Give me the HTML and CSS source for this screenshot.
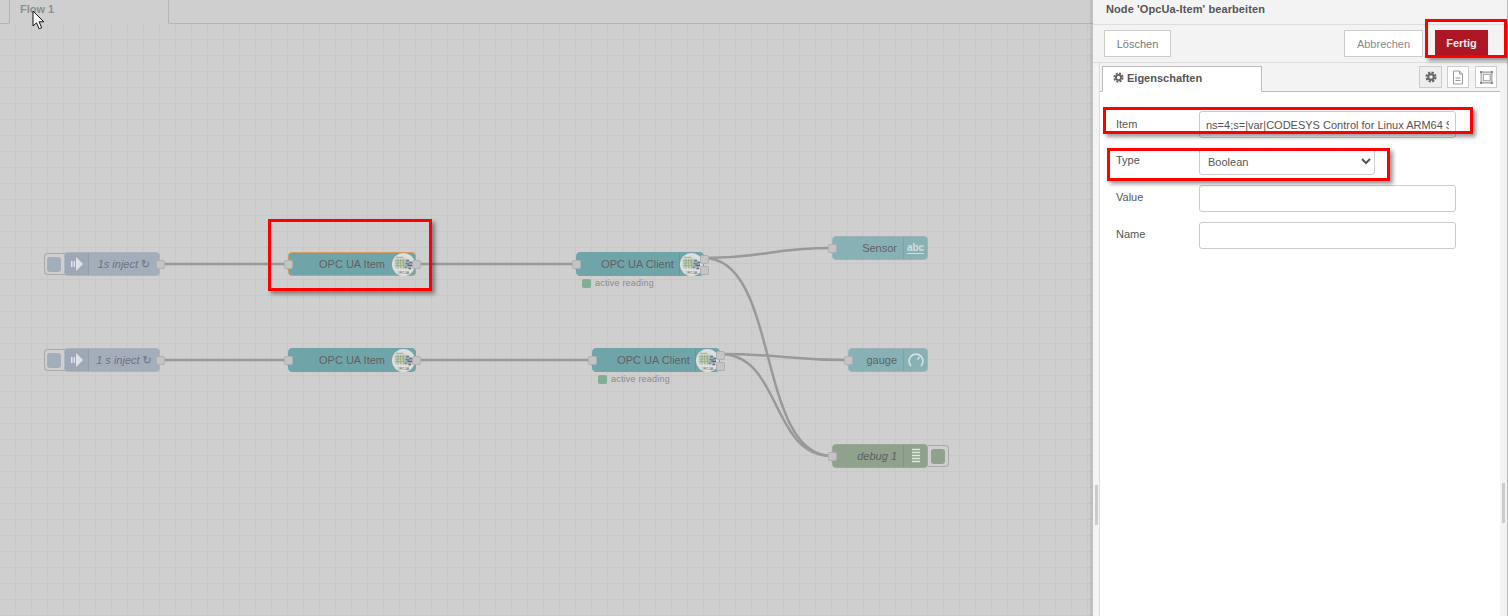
FILE: index.html
```html
<!DOCTYPE html>
<html>
<head>
    <title>Node-RED</title>
    <link rel="stylesheet" href="styles.css">
</head>
<body>
    <svg class="defs" width="0" height="0">
        <symbol id="opc" viewBox="0 0 24 24">
            <circle cx="12" cy="12" r="12" fill="#dededa"/>
            <rect x="3" y="6" width="13" height="10" fill="#c3cdb8"/>
            <path d="M3 8h13M3 10.500h13M3 13h13M6 6v10M9 6v10M12 6v10" stroke="#84a07c" stroke-width=".6"/>
            <path d="M4 4.500h8" stroke="#9aa89a" stroke-width="1"/>
            <rect x="15" y="7" width="3" height="2" fill="#5f7a8e"/>
            <rect x="18" y="9" width="3" height="2" fill="#54708a"/>
            <rect x="14" y="10" width="4" height="2" fill="#6b8294"/>
            <rect x="16" y="12" width="5" height="2" fill="#4f6b82"/>
            <rect x="13" y="14" width="3" height="2" fill="#7c90a0"/>
            <rect x="17" y="15" width="3" height="2" fill="#5f7a8e"/>
            <text x="12" y="21.500" class="opc-text">OPC UA</text>
        </symbol>
        <symbol id="inject" viewBox="0 0 14 16">
            <path d="M1 5h1.500v6H1zM3.500 5H5v6H3.500z" fill="#dfe2e6"/>
            <path d="M6 1l7 7-7 7v-4H6V5z" fill="#dfe2e6"/>
        </symbol>
        <symbol id="gear" viewBox="0 0 12 12">
            <circle cx="6" cy="6" r="4.500" class="gear-teeth"/>
            <circle cx="6" cy="6" r="2.800" class="gear-ring"/>
        </symbol>
    </svg>

    <div class="app">
        <div class="workspace">
            <div class="tabs">
                <div class="tab">Flow 1</div>
            </div>
            <div class="canvas">
                <svg class="wires" width="1093" height="592" viewBox="0 24 1093 592">
                    <path d="M160 264H288"/>
                    <path d="M416 264H576"/>
                    <path d="M160 360H288"/>
                    <path d="M416 360H592"/>
                    <path d="M704 258C768 258 768 248 832 248"/>
                    <path d="M704 258C780 258 756 456 832 456"/>
                    <path d="M720 354C784 354 784 360 848 360"/>
                    <path d="M720 354C782 354 770 456 832 456"/>
                </svg>

                <div class="inject-btn btn-a"><span></span></div>
                <div class="node inject inject-a">
                    <div class="icon icon-left"><svg width="14" height="16"><use href="#inject"/></svg></div>
                    <div class="label italic">1s inject ↻</div>
                    <span class="port port-out"></span>
                </div>

                <div class="inject-btn btn-b"><span></span></div>
                <div class="node inject inject-b">
                    <div class="icon icon-left"><svg width="14" height="16"><use href="#inject"/></svg></div>
                    <div class="label italic">1 s inject ↻</div>
                    <span class="port port-out"></span>
                </div>

                <div class="node opc item-a selected">
                    <span class="port port-in"></span>
                    <div class="label">OPC UA Item</div>
                    <svg class="opc-icon" width="23" height="23"><use href="#opc"/></svg>
                    <span class="port port-out"></span>
                </div>

                <div class="node opc item-b">
                    <span class="port port-in"></span>
                    <div class="label">OPC UA Item</div>
                    <svg class="opc-icon" width="23" height="23"><use href="#opc"/></svg>
                    <span class="port port-out"></span>
                </div>

                <div class="node opc client client-a">
                    <span class="port port-in"></span>
                    <div class="label">OPC UA Client</div>
                    <svg class="opc-icon" width="23" height="23"><use href="#opc"/></svg>
                    <span class="port port-out1"></span>
                    <span class="port port-out2"></span>
                    <div class="status"><i></i>active reading</div>
                </div>

                <div class="node opc client client-b">
                    <span class="port port-in"></span>
                    <div class="label">OPC UA Client</div>
                    <svg class="opc-icon" width="23" height="23"><use href="#opc"/></svg>
                    <span class="port port-out1"></span>
                    <span class="port port-out2"></span>
                    <div class="status"><i></i>active reading</div>
                </div>

                <div class="node ui sensor">
                    <span class="port port-in"></span>
                    <div class="label">Sensor</div>
                    <div class="icon icon-right"><span class="abc">abc</span></div>
                </div>

                <div class="node ui gauge">
                    <span class="port port-in"></span>
                    <div class="label">gauge</div>
                    <div class="icon icon-right">
                        <svg width="16" height="16" viewBox="0 0 16 16"><path d="M3 14A7 7 0 1 1 13 14M9.500 7.500L11.500 5" class="gauge-line"/></svg>
                    </div>
                </div>

                <div class="node debug debug-a">
                    <span class="port port-in"></span>
                    <div class="label italic">debug 1</div>
                    <div class="icon icon-right">
                        <svg width="10" height="16" viewBox="0 0 10 16"><path d="M1 1.500h8M1 4.500h8M1 7.500h8M1 10.500h8M1 13.500h8" class="debug-line"/></svg>
                    </div>
                </div>
                <div class="debug-btn"><span></span></div>
            </div>
            <svg class="cursor" width="14" height="20" viewBox="0 0 14 20">
                <path d="M1 1v15l3.500-3.200 2.600 6 2.600-1.100-2.600-5.900h4.700z" fill="#fff" stroke="#111" stroke-width="1"/>
            </svg>
        </div>

        <div class="panel">
            <div class="panel-title">Node 'OpcUa-Item' bearbeiten</div>
            <div class="panel-toolbar">
                <button class="btn">Löschen</button>
                <div class="spacer"></div>
                <button class="btn btn-cancel">Abbrechen</button>
                <button class="btn btn-primary">Fertig</button>
            </div>
            <div class="panel-body">
                <div class="panel-tabs">
                    <div class="panel-tab">
                        <svg width="11" height="11"><use href="#gear"/></svg>
                        Eigenschaften
                    </div>
                    <div class="spacer"></div>
                    <div class="tab-btn active">
                        <svg width="12" height="12"><use href="#gear"/></svg>
                    </div>
                    <div class="tab-btn">
                        <svg width="12" height="15" viewBox="0 0 12 15"><path d="M1.500 1h6l3 3v10h-9zM7.500 1v3h3M3.500 8h5M3.500 10.500h5" class="line-icon"/></svg>
                    </div>
                    <div class="tab-btn">
                        <svg width="15" height="15" viewBox="0 0 14 14"><path d="M2 2h10v10H2zM4 4h6.500v6H4z" class="line-icon"/><path d="M1 1h2v2H1zM11 1h2v2h-2zM1 11h2v2H1zM11 11h2v2h-2z" class="corner-icon"/></svg>
                    </div>
                </div>
                <form class="form">
                    <div class="row">
                        <label class="up-1">Item</label>
                        <input type="text" value="ns=4;s=|var|CODESYS Control for Linux ARM64 SM.Application.PLC_PRG.x">
                    </div>
                    <div class="row">
                        <label>Type</label>
                        <select class="short"><option>Boolean</option></select>
                    </div>
                    <div class="row">
                        <label>Value</label>
                        <input type="text">
                    </div>
                    <div class="row">
                        <label>Name</label>
                        <input type="text">
                    </div>
                </form>
            </div>
            <div class="handle"></div>
            <div class="scroll-thumb"></div>
        </div>
    </div>

    <div class="mark mark-node"></div>
    <div class="mark mark-done"></div>
    <div class="mark mark-item"></div>
    <div class="mark mark-type"></div>
</body>
</html>
```

FILE: styles.css
```css
* {
    box-sizing: border-box;
}
html, body {
    margin: 0;
    height: 100%;
    overflow: hidden;
}
body {
    font-family: "Liberation Sans", "DejaVu Sans", sans-serif;
    font-size: 11px;
    color: #555;
}
.defs {
    position: absolute;
}
.app {
    display: flex;
    height: 616px;
}
.spacer {
    flex: 1;
}

/* workspace */
.workspace {
    width: 1093px;
    position: relative;
    background: #cfcfcf;
}
.workspace::after {
    content: "";
    position: absolute;
    right: 0;
    top: 0;
    bottom: 0;
    width: 3px;
    background: rgba(0, 0, 0, 0.07);
}
.tabs {
    height: 24px;
    border-bottom: 1px solid #b5b5b5;
    padding-left: 9px;
}
.tab {
    width: 160px;
    height: 24px;
    border: 1px solid #b5b5b5;
    border-top: 0;
    border-bottom: 1px solid #cfcfcf;
    padding: 3px 0 0 10px;
    font-weight: bold;
    font-size: 11px;
    color: #8f8f8f;
}
.canvas {
    position: relative;
    height: 592px;
    background-color: #cfcfcf;
    background-image:
        linear-gradient(#c8c8c8 1px, transparent 1px),
        linear-gradient(90deg, #c8c8c8 1px, transparent 1px);
    background-size: 16px 16px;
    background-position: 15px 15px;
}
.wires {
    position: absolute;
    left: 0;
    top: 0;
}
.wires path {
    fill: none;
    stroke: #999;
    stroke-width: 2.500;
}
.cursor {
    position: absolute;
    left: 32px;
    top: 10px;
}

/* nodes */
.node {
    position: absolute;
    height: 24px;
    display: flex;
    align-items: center;
    border: 1px solid #a9a9a9;
    border-radius: 4px;
}
.label {
    flex: 1;
    text-align: center;
    font-size: 11px;
    color: #616161;
    white-space: nowrap;
}
.italic {
    font-style: italic;
}
.icon {
    width: 24px;
    height: 22px;
    display: flex;
    align-items: center;
    justify-content: center;
    flex-shrink: 0;
}
.icon-left {
    background: rgba(0, 0, 0, 0.03);
    border-right: 1px solid rgba(0, 0, 0, 0.08);
    border-radius: 3px 0 0 3px;
}
.icon-right {
    border-left: 1px solid rgba(0, 0, 0, 0.08);
    border-radius: 0 3px 3px 0;
}
.inject {
    background: #a4aebb;
    border-color: #adb3bb;
    width: 96px;
    left: 64px;
}
.inject .label {
    color: #6d737b;
}
.inject-a { top: 228px; }
.inject-b { top: 324px; }
.opc {
    background: #6fa5a8;
    width: 128px;
    border-color: #6fa5a8;
}
.opc .label {
    padding-right: 0;
}
.client .label {
    padding-right: 5px;
}
.client::after {
    content: "";
    position: absolute;
    right: 23px;
    top: 0;
    bottom: 0;
    width: 1px;
    background: rgba(0, 0, 0, 0.08);
}
.item-a { left: 288px; top: 228px; }
.item-b { left: 288px; top: 324px; }
.client-a { left: 576px; top: 228px; }
.client-b { left: 592px; top: 324px; }
.selected {
    border-color: #d39a62;
}
.opc-icon {
    position: absolute;
    right: 0;
    top: 0;
}
.opc-text {
    font-size: 3px;
    fill: #555;
    text-anchor: middle;
}
.ui {
    background: #88b1b6;
    border-color: #9cb5b8;
}
.sensor { left: 832px; top: 212px; width: 96px; }
.gauge { left: 848px; top: 324px; width: 80px; }
.debug {
    background: #8fa28c;
    border-color: #9aa897;
}
.debug-a { left: 832px; top: 420px; width: 96px; }
.label.italic, .sensor .label, .gauge .label {
    text-align: right;
    padding-right: 6px;
}
.inject .label.italic {
    padding-right: 0;
    text-align: center;
}
.abc {
    font-size: 10px;
    font-weight: bold;
    color: #d0dfe0;
    border-bottom: 1px solid #d0dfe0;
    line-height: 10px;
}
.gauge-line, .debug-line {
    fill: none;
    stroke: #d5e2e3;
    stroke-width: 1.300;
}
.gauge-line {
    stroke-width: 1.600;
}
.debug-line {
    stroke: #e2e6df;
}

/* ports */
.port {
    position: absolute;
    z-index: 1;
    width: 9px;
    height: 9px;
    background: #c4c4c4;
    border: 1px solid #b0b0b0;
    border-radius: 2px;
}
.port-in {
    left: -5px;
    top: 7px;
}
.port-out {
    right: -6px;
    top: 7px;
}
.port-out1 {
    right: -6px;
    top: 2px;
}
.port-out2 {
    right: -6px;
    top: 13px;
}

/* inject and debug buttons */
.inject-btn, .debug-btn {
    position: absolute;
    width: 21px;
    height: 22px;
    border: 1px solid #a9a9a9;
    background: #cfcfcf;
    display: flex;
    align-items: center;
}
.inject-btn {
    left: 44px;
    padding-left: 2px;
    border-right: 0;
    border-radius: 4px 0 0 4px;
}
.btn-a { top: 229px; }
.btn-b { top: 325px; }
.inject-btn span, .debug-btn span {
    width: 14px;
    height: 15px;
    border-radius: 3px;
    background: #a4aebb;
}
.debug-btn {
    left: 928px;
    top: 421px;
    padding-left: 3px;
    border-left: 0;
    border-radius: 0 4px 4px 0;
}
.debug-btn span {
    background: #8fa28c;
}

/* status */
.status {
    position: absolute;
    left: 5px;
    top: 25px;
    display: flex;
    align-items: center;
    gap: 4px;
    font-size: 9px;
    letter-spacing: 0.2px;
    color: #8a8a8a;
    white-space: nowrap;
}
.status i {
    width: 9px;
    height: 9px;
    border-radius: 2px;
    background: #7faf96;
}

/* side panel */
.panel {
    width: 415px;
    position: relative;
    background: #f3f3f3;
    border-right: 1px solid #bbb;
}
.panel-title {
    height: 25px;
    padding: 3px 0 0 13px;
    font-weight: bold;
    font-size: 11px;
    letter-spacing: 0.1px;
    color: #555;
    border-bottom: 1px solid #ddd;
}
.panel-toolbar {
    height: 38px;
    display: flex;
    align-items: flex-start;
    padding: 5px 19px 0 11px;
    gap: 12px;
    border-bottom: 1px solid #ddd;
}
.btn {
    height: 27px;
    padding: 0;
    width: 67px;
    font: 11px "Liberation Sans", sans-serif;
    color: #777;
    background: #fff;
    border: 1px solid #ccc;
}
.btn-cancel {
    width: 79px;
    color: #888;
}
.btn-primary {
    width: 53px;
    height: 26px;
    background: #ad1625;
    border-color: #ad1625;
    color: #eee;
    font-weight: bold;
}
.panel-body {
    margin-left: 6px;
    width: 401px;
    height: 553px;
    background: #fff;
    border-left: 1px solid #ddd;
}
.panel-tabs {
    height: 29px;
    display: flex;
    align-items: flex-start;
    gap: 6px;
    padding: 3px 3px 0 2px;
    background: #f3f3f3;
    border-bottom: 1px solid #bbb;
}
.panel-tab {
    width: 160px;
    height: 26px;
    display: flex;
    align-items: center;
    gap: 3px;
    padding: 0 0 3px 10px;
    font-weight: bold;
    color: #555;
    background: #fff;
    border: 1px solid #bbb;
    border-bottom: 1px solid #fff;
}
.tab-btn {
    width: 22px;
    height: 22px;
    display: flex;
    align-items: center;
    justify-content: center;
    background: #fff;
    border: 1px solid #ccc;
}
.tab-btn.active {
    width: 23px;
    margin-right: -1px;
    background: #eee;
}
.gear-teeth {
    fill: none;
    stroke: #666;
    stroke-width: 2.200;
    stroke-dasharray: 2.200 1.330;
}
.gear-ring {
    fill: none;
    stroke: #666;
    stroke-width: 2;
}
.line-icon {
    fill: none;
    stroke: #999;
    stroke-width: 1;
}
.corner-icon {
    fill: #888;
}
.form {
    padding: 19px 0 0 16px;
    display: flex;
    flex-direction: column;
    gap: 10px;
}
.row {
    display: flex;
    align-items: center;
}
.row label {
    width: 83px;
    position: relative;
    top: -2px;
    color: #555;
    font-size: 11px;
}
.row label.up-1 {
    top: -1px;
}
.row input, .row select {
    width: 257px;
    height: 27px;
    padding: 0 6px;
    font: 11px "Liberation Sans", sans-serif;
    color: #555;
    background: #fff;
    border: 1px solid #ccc;
    border-radius: 3px;
}
.row select.short {
    width: 176px;
    padding: 0 4px;
}
.handle {
    position: absolute;
    left: 2px;
    top: 485px;
    width: 3px;
    height: 40px;
    background: #ccc;
}
.scroll-thumb {
    position: absolute;
    left: 409px;
    top: 483px;
    width: 3px;
    height: 40px;
    background: #ccc;
}

/* red marks drawn over the screenshot */
.mark {
    position: absolute;
    border: 3px solid #f00;
    box-shadow: 3px 3px 4px rgba(0, 0, 0, 0.4);
}
.mark-node { left: 268px; top: 219px; width: 164px; height: 72px; }
.mark-done { left: 1425px; top: 19px; width: 82px; height: 39px; }
.mark-item { left: 1103px; top: 107px; width: 370px; height: 27px; }
.mark-type { left: 1107px; top: 148px; width: 283px; height: 33px; }
```
